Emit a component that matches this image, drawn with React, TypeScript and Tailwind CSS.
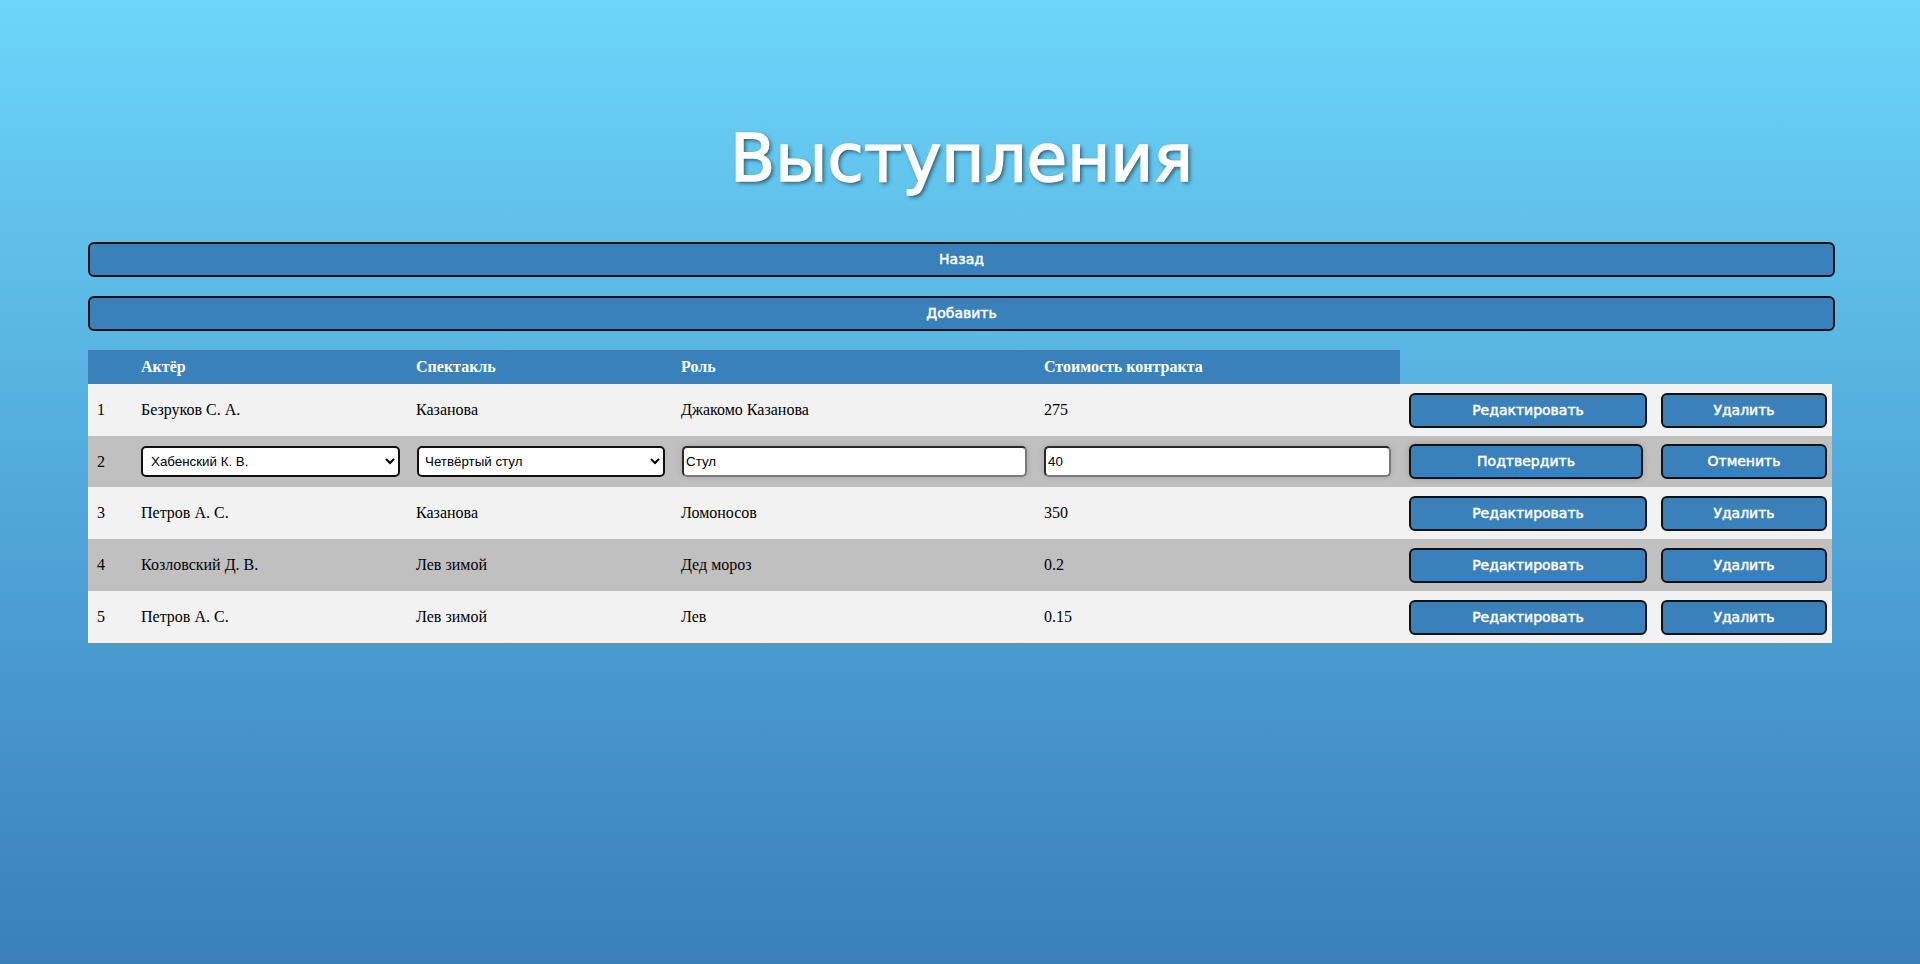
import React from "react";

const rows = [
  { id: 1, actor: "Безруков С. А.", show: "Казанова", role: "Джакомо Казанова", cost: "275" },
  { id: 2, actor: "Хабенский К. В.", show: "Четвёртый стул", role: "Стул", cost: "40", editing: true },
  { id: 3, actor: "Петров А. С.", show: "Казанова", role: "Ломоносов", cost: "350" },
  { id: 4, actor: "Козловский Д. В.", show: "Лев зимой", role: "Дед мороз", cost: "0.2" },
  { id: 5, actor: "Петров А. С.", show: "Лев зимой", role: "Лев", cost: "0.15" },
];

const comic = "font-['Comic_Sans_MS','Comic_Neue','DejaVu_Sans',sans-serif]";

const Btn = ({ children, className }: any) => (
  <button
    className={`${comic} h-[35px] rounded-[6px] border-2 border-[#111] bg-[#3a81bc] text-[14px] text-white [-webkit-text-stroke:0.5px_white] ${className}`}
  >
    {children}
  </button>
);

const fieldText = "font-['Liberation_Sans',Arial,sans-serif] text-[13.33px] text-black";

const Row = ({ row, odd }: any) => {
  const bg = odd ? "bg-[#f2f2f2]" : "bg-[#c0c0c0]";
  if (row.editing) {
    return (
      <tr className={`${bg} h-[51px]`}>
        <td className="pl-[9px]">{row.id}</td>
        <td className="pl-[9px] pr-2">
          <select
            defaultValue={row.actor}
            className={`h-[31px] w-full rounded-[5px] border-2 border-[#111] bg-white pl-1 ${fieldText}`}
          >
            <option>{row.actor}</option>
          </select>
        </td>
        <td className="pl-[9px] pr-2">
          <select
            defaultValue={row.show}
            className={`h-[31px] w-full rounded-[5px] border-2 border-[#111] bg-white pl-0.5 ${fieldText}`}
          >
            <option>{row.show}</option>
          </select>
        </td>
        <td className="pl-[9px] pr-[9px]">
          <input
            defaultValue={row.role}
            className={`h-[31px] w-full rounded-[5px] border-2 border-[#2a2a2a] border-b-[#7a7a7a] border-r-[#7a7a7a] bg-white px-0.5 shadow-[0_0_6px_rgba(0,0,0,0.15)] ${fieldText}`}
          />
        </td>
        <td className="pl-2 pr-[9px]">
          <input
            defaultValue={row.cost}
            className={`h-[31px] w-full rounded-[5px] border-2 border-[#2a2a2a] border-b-[#7a7a7a] border-r-[#7a7a7a] bg-white px-0.5 shadow-[0_0_6px_rgba(0,0,0,0.15)] ${fieldText}`}
          />
        </td>
        <td className="pl-[9px]">
          <Btn className="w-[234px] shadow-[0_0_6px_rgba(0,0,0,0.2)]">Подтвердить</Btn>
        </td>
        <td className="pl-[9px]">
          <Btn className="w-[166px]">Отменить</Btn>
        </td>
      </tr>
    );
  }
  return (
    <tr className={`${bg} h-[52px]`}>
      <td className="pl-[9px]">{row.id}</td>
      <td className="pl-[9px]">{row.actor}</td>
      <td className="pl-2">{row.show}</td>
      <td className="pl-2">{row.role}</td>
      <td className="pl-2">{row.cost}</td>
      <td className="pl-[9px]">
        <Btn className="w-[238px]">Редактировать</Btn>
      </td>
      <td className="pl-[9px]">
        <Btn className="w-[166px]">Удалить</Btn>
      </td>
    </tr>
  );
};

export default function App() {
  return (
    <div className="min-h-[964px] w-full bg-gradient-to-b from-[#6dd5fa] to-[#3a7fba] pl-[88px] pr-[85px] pt-[108px]">
      <h1
        className={`${comic} h-[100px] text-center text-[66px] leading-[104px] text-white [-webkit-text-stroke:1.5px_white] [text-shadow:2px_2px_4px_rgba(0,0,0,0.6)]`}
      >
        Выступления
      </h1>
      <div className="mt-[34px] flex flex-col gap-[19px]">
        <Btn className="w-full">Назад</Btn>
        <Btn className="w-full">Добавить</Btn>
      </div>
      <table className="mt-[19px] w-[1744px] table-fixed font-['Liberation_Serif','Times_New_Roman',serif] text-[16px] text-black">
        <colgroup>
          <col className="w-[44px]" />
          <col className="w-[276px]" />
          <col className="w-[265px]" />
          <col className="w-[363px]" />
          <col className="w-[364px]" />
          <col className="w-[252px]" />
          <col className="w-[180px]" />
        </colgroup>
        <thead>
          <tr className="h-[34px] text-left font-bold text-white">
            <th className="bg-[#3a81bc]"></th>
            <th className="bg-[#3a81bc] pl-[9px]">Актёр</th>
            <th className="bg-[#3a81bc] pl-2">Спектакль</th>
            <th className="bg-[#3a81bc] pl-2">Роль</th>
            <th className="bg-[#3a81bc] pl-2">Стоимость контракта</th>
            <th></th>
            <th></th>
          </tr>
        </thead>
        <tbody>
          {rows.map((row, i) => (
            <Row key={row.id} row={row} odd={i % 2 === 0} />
          ))}
        </tbody>
      </table>
    </div>
  );
}
